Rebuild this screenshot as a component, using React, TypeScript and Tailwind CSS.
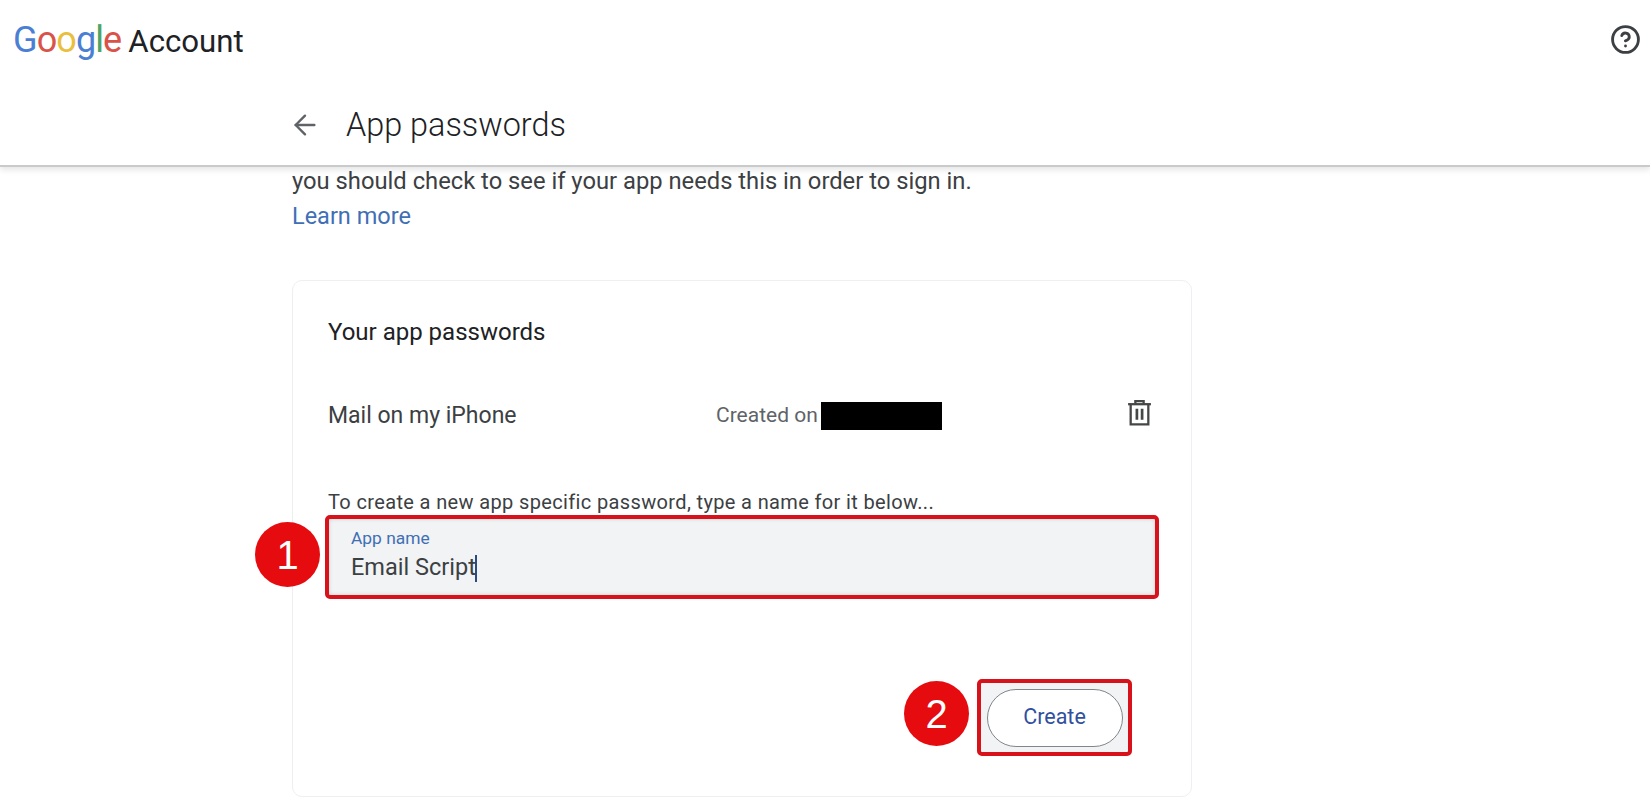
import { ArrowLeft, CircleHelp } from 'lucide-react';

function TrashIcon() {
  return (
    <svg viewBox="0 0 24 26" className="h-[27px] w-[25px]" fill="none" stroke="#444746" strokeWidth="2.2">
      <path d="M1 5h22" />
      <path d="M8 4.5V2h8v2.5" />
      <path d="M3.5 5v19.5h17V5" />
      <path d="M9.5 9.5v10.5M14.5 9.5v10.5" strokeWidth="2.6" />
    </svg>
  );
}

function Badge({ n, className }: { n: string; className: string }) {
  return (
    <div
      className={`absolute flex h-[65px] w-[65px] items-center justify-center rounded-full bg-[#e50b0f] font-['Liberation_Sans',sans-serif] text-[40px] text-white ${className}`}
    >
      {n}
    </div>
  );
}

function App() {
  return (
    <div className="relative h-[805px] w-full overflow-hidden bg-white font-['Roboto',sans-serif] text-[#3c4043]">
      {/* Top bars */}
      <header className="relative z-10 h-[167px] border-b-2 border-[#c9cacb] bg-white shadow-[0_3px_6px_rgba(0,0,0,0.1)]">
        <div className="flex h-[79px] items-center justify-between pl-[13px] pr-[9px]">
          <div className="flex items-baseline text-[36px] leading-none tracking-[-0.9px]">
            <span className="text-[#4a7fd4]">G</span>
            <span className="text-[#d9534a]">o</span>
            <span className="text-[#eabf3e]">o</span>
            <span className="text-[#4a7fd4]">g</span>
            <span className="text-[#4fa463]">l</span>
            <span className="text-[#d9534a]">e</span>
            <span className="ml-[7px] text-[31.2px] tracking-normal text-[#202124]">Account</span>
          </div>
          <CircleHelp className="h-[31px] w-[31px] text-[#3c4043]" strokeWidth={2.2} />
        </div>
        <div className="flex items-center pl-[289px] pt-[26px]">
          <ArrowLeft className="h-[32px] w-[32px] text-[#5f6368]" strokeWidth={1.8} />
          <h1 className="ml-[25px] text-[32.4px] font-light leading-[40px] text-[#202124]">App passwords</h1>
        </div>
      </header>

      <main className="pl-[292px]">
        <p className="-mt-[3px] text-[23.75px] leading-[35px]">you should check to see if your app needs this in order to sign in.</p>
        <a className="block text-[23.5px] leading-[35px] text-[#3f6fb5]">Learn more</a>

        {/* Card */}
        <section className="relative mt-[46px] h-[517px] w-[900px] rounded-[10px] border border-[#eeeff1] bg-white pl-[35px] pr-[33px]">
          <h2 className="pt-[36px] text-[24px] leading-[30px] text-[#202124]">Your app passwords</h2>

          <div className="mt-[54px] flex h-[30px] items-center">
            <span className="w-[388px] text-[23px] text-[#3c4043]">Mail on my iPhone</span>
            <span className="text-[21px] text-[#5f6368]">Created on</span>
            <span className="ml-[3px] h-[28px] w-[121px] bg-black" />
            <span className="ml-auto pb-[8px] pr-[6px]">
              <TrashIcon />
            </span>
          </div>

          <p className="mt-[57px] text-[20px] leading-[28px] tracking-[0.36px]">To create a new app specific password, type a name for it below...</p>

          <div className="-ml-[3px] -mt-px h-[84px] w-[834px] rounded-[5px] border-[4px] border-[#d7121a] bg-[#f1f3f4] pl-[22px] shadow-[inset_0_0_4px_rgba(0,0,0,0.15)]">
            <div className="pt-[8px] text-[17.4px] leading-[22px] text-[#3f6fb5]">App name</div>
            <div className="mt-[3px] flex h-[32px] items-center text-[23.5px]">
              Email Script
              <span className="-ml-px h-[27px] w-[2px] bg-[#2b4a80]" />
            </div>
          </div>

          <div className="mt-[80px] flex justify-end pr-[26px]">
            <div className="flex h-[77px] w-[155px] items-center justify-center rounded-[5px] border-[4px] border-[#d7121a] bg-[#f1f3f4]">
              <button className="h-[58px] w-[136px] rounded-full border border-[#80868b] bg-white text-[21.5px] text-[#31509f]">
                Create
              </button>
            </div>
          </div>

          <Badge n="1" className="left-[-38px] top-[241px]" />
          <Badge n="2" className="left-[611px] top-[400px]" />
        </section>
      </main>
    </div>
  );
}

export default App;
